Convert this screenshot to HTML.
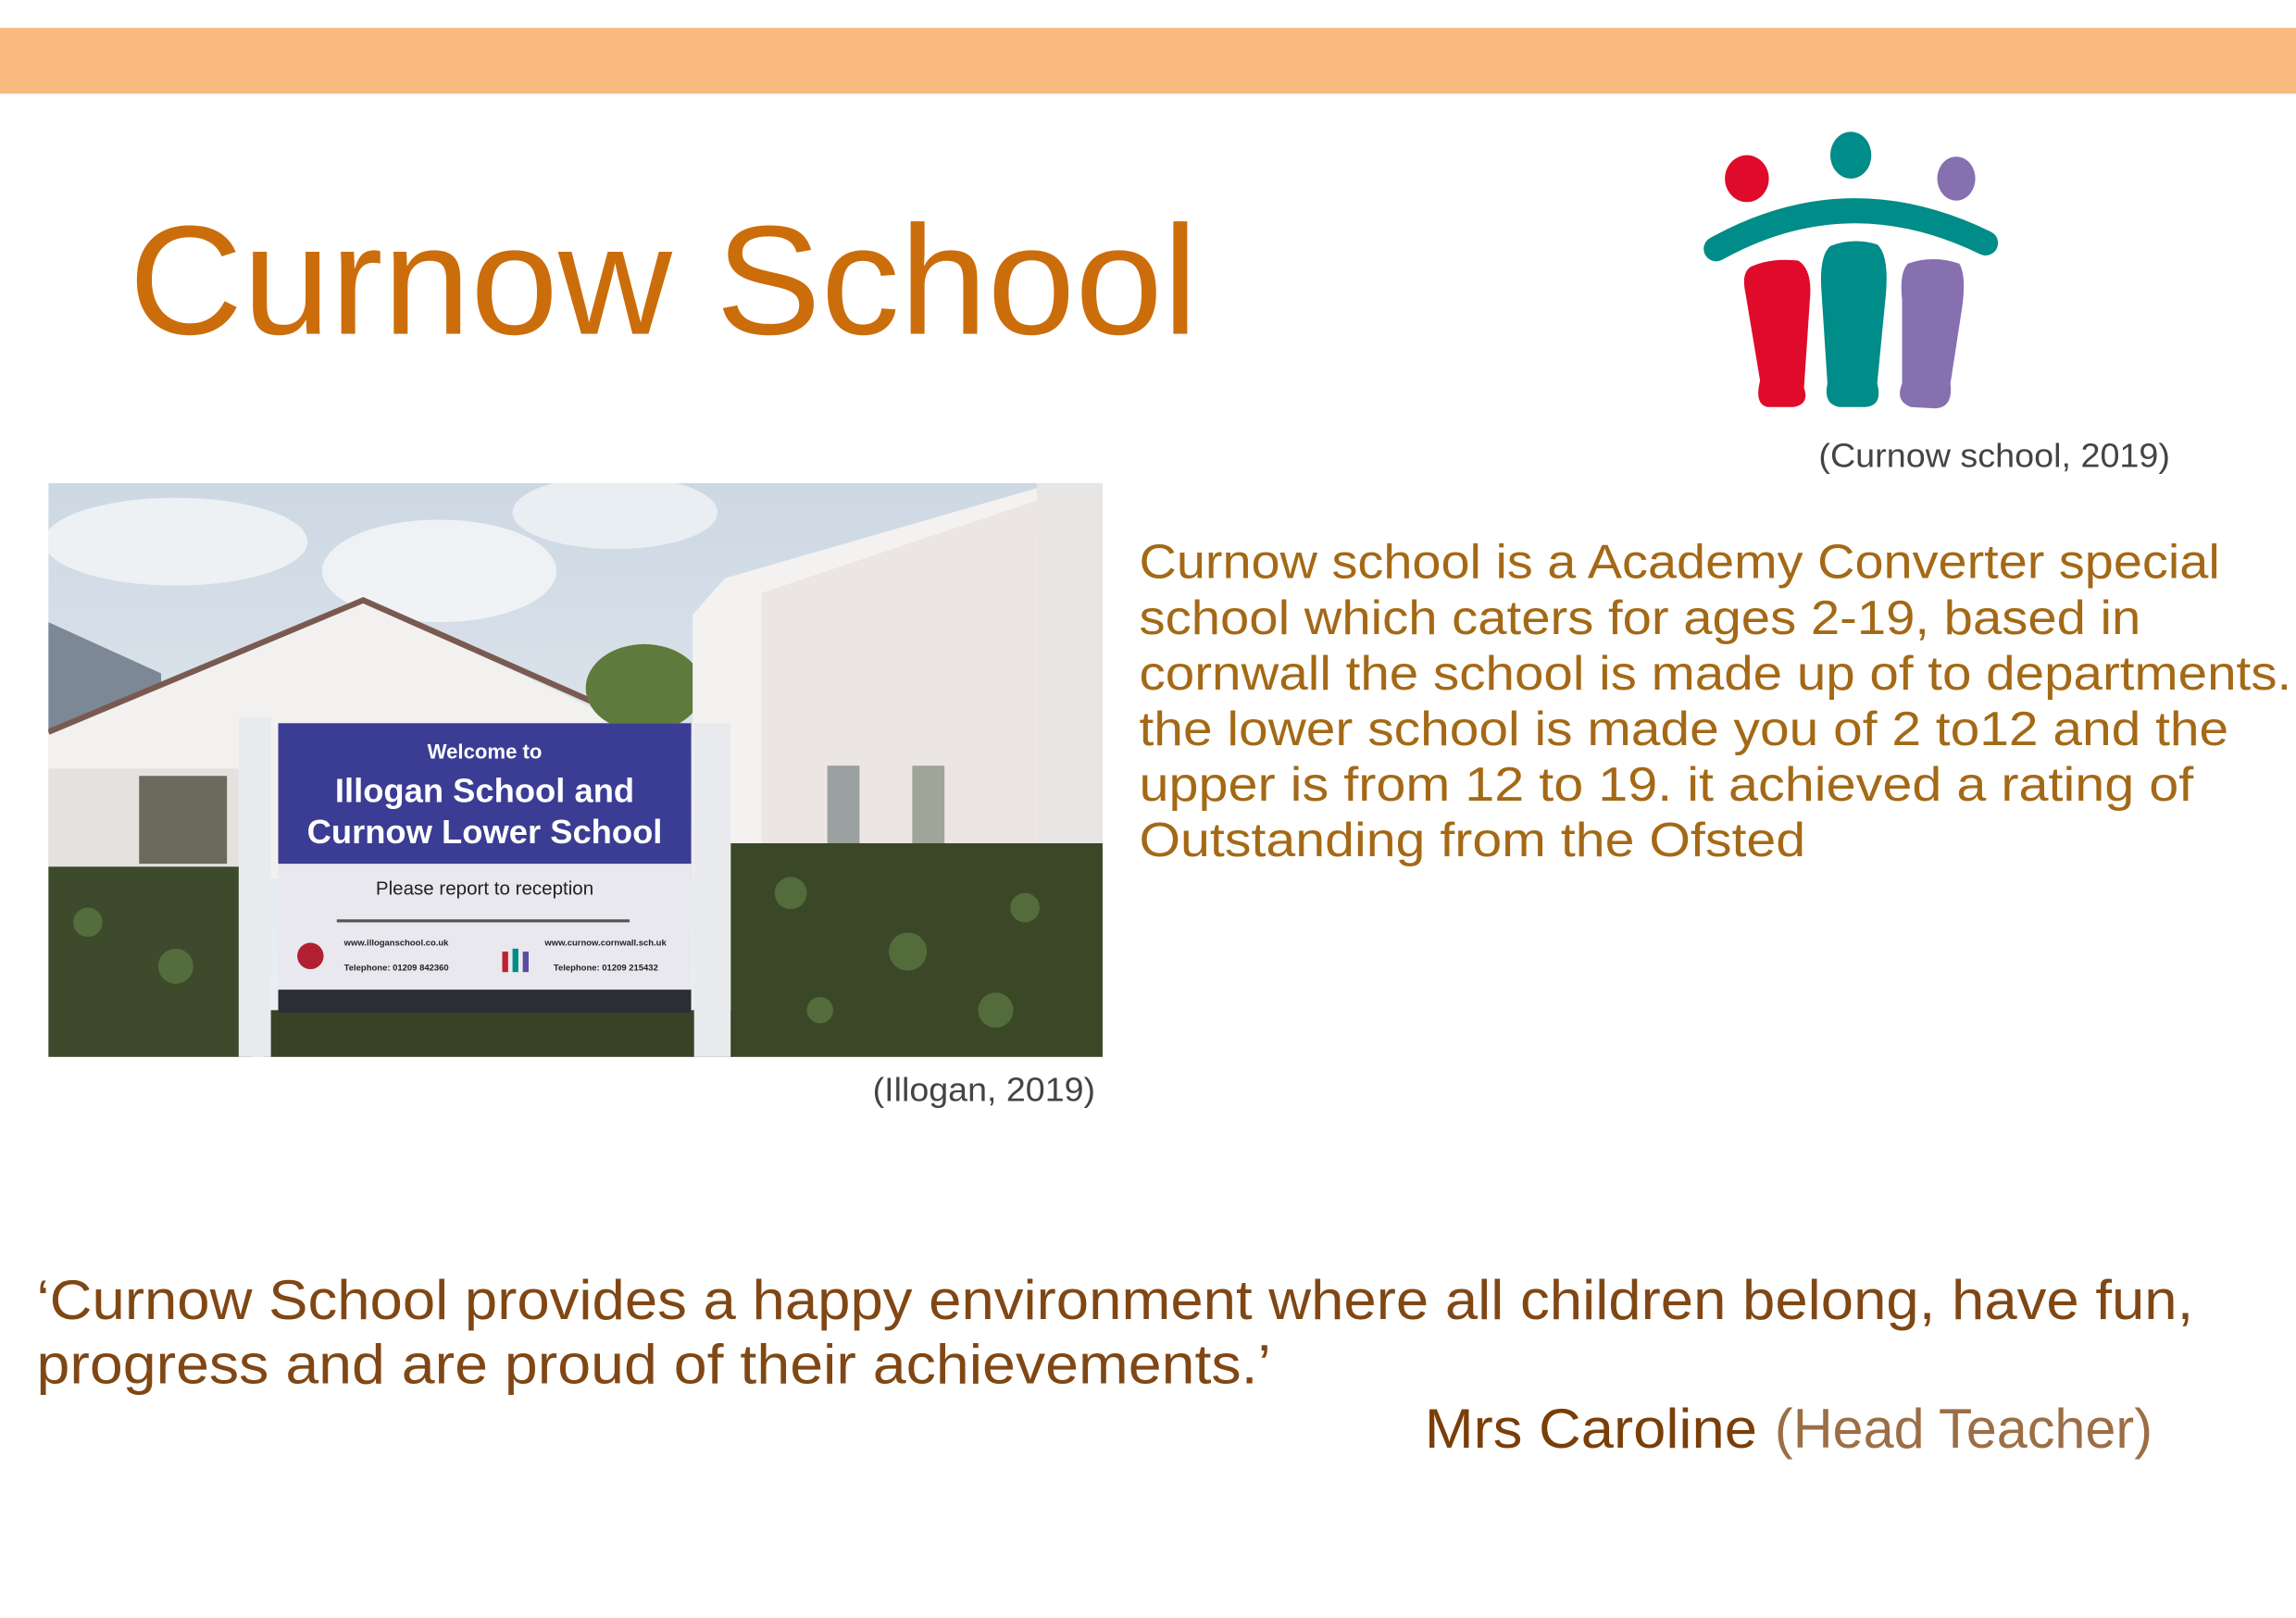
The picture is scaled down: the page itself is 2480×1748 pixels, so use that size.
<!DOCTYPE html>
<html><head><meta charset="utf-8">
<style>
html,body{margin:0;padding:0;background:#fff;}
svg{display:block;}
text{font-family:"Liberation Sans",sans-serif;}
</style></head>
<body>
<svg width="2480" height="1748" viewBox="0 0 1568 1105.2" xmlns="http://www.w3.org/2000/svg">
<rect x="0" y="0" width="1568" height="1106" fill="#fff"/>
<rect x="0" y="19" width="1568" height="45" fill="#F9BA80"/>

<text x="88" y="228" font-size="106" fill="#CC6D0C" textLength="730" lengthAdjust="spacingAndGlyphs">Curnow School</text>

<!-- logo -->
<g>
<ellipse cx="1193" cy="122" rx="15" ry="16" fill="#E00A2A"/>
<ellipse cx="1264" cy="106" rx="14" ry="16" fill="#008C88"/>
<ellipse cx="1336" cy="122" rx="13" ry="15" fill="#8670B0"/>
<path d="M1172 170 Q1262 120 1356 166" stroke="#008C88" stroke-width="17" fill="none" stroke-linecap="round"/>
<path d="M1196 182 Q1210 176 1228 178 Q1238 184 1236 205 L1232 265 Q1236 276 1225 278 L1207 278 Q1198 276 1202 260 L1192 200 Q1189 186 1196 182Z" fill="#E00A2A"/>
<path d="M1250 168 Q1266 162 1282 167 Q1290 174 1288 200 L1282 262 Q1286 277 1274 278 L1256 278 Q1245 276 1248 262 L1244 200 Q1242 175 1250 168Z" fill="#008C88"/>
<path d="M1303 180 Q1320 174 1338 180 Q1343 188 1340 210 L1332 262 Q1334 278 1322 279 L1305 278 Q1294 274 1299 262 L1299 205 Q1297 186 1303 180Z" fill="#8670B0"/>
</g>
<text x="1242" y="319" font-size="23" fill="#444" textLength="240" lengthAdjust="spacingAndGlyphs">(Curnow school, 2019)</text>

<!-- photo -->
<defs>
<linearGradient id="sky" x1="0" y1="0" x2="0" y2="1"><stop offset="0" stop-color="#cdd8e4"/><stop offset="1" stop-color="#eef1f4"/></linearGradient>
<clipPath id="pc"><rect x="33" y="330" width="720" height="392"/></clipPath>
</defs>
<g clip-path="url(#pc)">
<rect x="33" y="330" width="720" height="392" fill="url(#sky)"/>
<ellipse cx="120" cy="370" rx="90" ry="30" fill="#f4f6f8" opacity=".8"/>
<ellipse cx="300" cy="390" rx="80" ry="35" fill="#f6f7f9" opacity=".8"/>
<ellipse cx="420" cy="350" rx="70" ry="25" fill="#f4f6f8" opacity=".7"/>
<!-- left shed -->
<polygon points="33,425 110,460 110,500 33,500" fill="#7d8896"/>
<!-- house -->
<polygon points="33,500 248,410 440,500 440,600 33,600" fill="#f2f1ef"/>
<path d="M33 500 L248 410 L440 495" stroke="#7a5a50" stroke-width="4" fill="none"/>
<rect x="33" y="525" width="130" height="70" fill="#e4e2df"/>
<rect x="95" y="530" width="60" height="60" fill="#6b6a5c"/>
<!-- tree -->
<ellipse cx="440" cy="470" rx="40" ry="30" fill="#5e7a3c"/>
<!-- right building -->
<polygon points="473,420 495,395 720,330 753,330 753,600 473,600" fill="#f4f2f0"/>
<polygon points="520,405 708,342 708,600 520,600" fill="#ebe6e3"/>
<rect x="708" y="330" width="45" height="270" fill="#e8e6e4"/>
<rect x="565" y="523" width="22" height="55" fill="#9ba0a0"/>
<rect x="623" y="523" width="22" height="55" fill="#a0a59a"/>
<!-- hedges -->
<rect x="33" y="592" width="140" height="130" fill="#3d4a2c"/>
<rect x="499" y="576" width="254" height="146" fill="#3a4828"/>
<rect x="180" y="690" width="320" height="32" fill="#3a4226"/>
<g fill="#6a8a4a" opacity=".55">
<circle cx="60" cy="630" r="10"/><circle cx="120" cy="660" r="12"/><circle cx="540" cy="610" r="11"/><circle cx="620" cy="650" r="13"/><circle cx="700" cy="620" r="10"/><circle cx="680" cy="690" r="12"/><circle cx="560" cy="690" r="9"/>
</g>
<!-- sign posts -->
<rect x="163" y="490" width="22" height="232" fill="#e9eaee"/>
<rect x="474" y="494" width="25" height="228" fill="#e9eaee"/>
<!-- sign -->
<rect x="190" y="494" width="282" height="198" fill="#e8e8ee"/>
<rect x="190" y="494" width="282" height="96" fill="#3B3C93"/>
<rect x="190" y="676" width="282" height="16" fill="#2d2d35"/>
<text x="331" y="518" font-size="14" font-weight="bold" fill="#fff" text-anchor="middle">Welcome to</text>
<text x="331" y="548" font-size="23" font-weight="bold" fill="#fff" text-anchor="middle">Illogan School and</text>
<text x="331" y="576" font-size="23" font-weight="bold" fill="#fff" text-anchor="middle">Curnow Lower School</text>
<text x="331" y="611" font-size="13" fill="#222" text-anchor="middle">Please report to reception</text>
<rect x="230" y="628" width="200" height="2" fill="#555"/>
<circle cx="212" cy="653" r="9" fill="#b02030"/>
<text x="235" y="646" font-size="6" font-weight="bold" fill="#222">www.illoganschool.co.uk</text>
<text x="235" y="663" font-size="6" font-weight="bold" fill="#222">Telephone: 01209 842360</text>
<text x="372" y="646" font-size="6" font-weight="bold" fill="#222">www.curnow.cornwall.sch.uk</text>
<text x="378" y="663" font-size="6" font-weight="bold" fill="#222">Telephone: 01209 215432</text>
<rect x="343" y="650" width="4" height="14" fill="#c02030"/><rect x="350" y="648" width="4" height="16" fill="#008C88"/><rect x="357" y="650" width="4" height="14" fill="#5a4aa0"/>
</g>
<text x="596" y="752" font-size="23" fill="#444" textLength="152" lengthAdjust="spacingAndGlyphs">(Illogan, 2019)</text>

<!-- paragraph -->
<g font-size="33" fill="#A0620A" opacity=".95">
<text x="778" y="395" textLength="738" lengthAdjust="spacingAndGlyphs">Curnow school is a Academy Converter special</text>
<text x="778" y="433" textLength="684" lengthAdjust="spacingAndGlyphs">school which caters for ages 2-19, based in</text>
<text x="778" y="471" textLength="787" lengthAdjust="spacingAndGlyphs">cornwall the school is made up of to departments.</text>
<text x="778" y="509" textLength="744" lengthAdjust="spacingAndGlyphs">the lower school is made you of 2 to12 and the</text>
<text x="778" y="547" textLength="720" lengthAdjust="spacingAndGlyphs">upper is from 12 to 19. it achieved a rating of</text>
<text x="778" y="585" textLength="455" lengthAdjust="spacingAndGlyphs">Outstanding from the Ofsted</text>
</g>

<!-- quote -->
<g font-size="38" fill="#7A3E08">
<text x="25" y="901" textLength="1473" lengthAdjust="spacingAndGlyphs" opacity=".95">‘Curnow School provides a happy environment where all children belong, have fun,</text>
<text x="25" y="945" textLength="843" lengthAdjust="spacingAndGlyphs" opacity=".95">progress and are proud of their achievements.’</text>
<text x="973" y="989" textLength="227" lengthAdjust="spacingAndGlyphs">Mrs Caroline</text>
<text x="1212" y="989" textLength="258" lengthAdjust="spacingAndGlyphs" opacity=".75">(Head Teacher)</text>
</g>
</svg>
</body></html>
